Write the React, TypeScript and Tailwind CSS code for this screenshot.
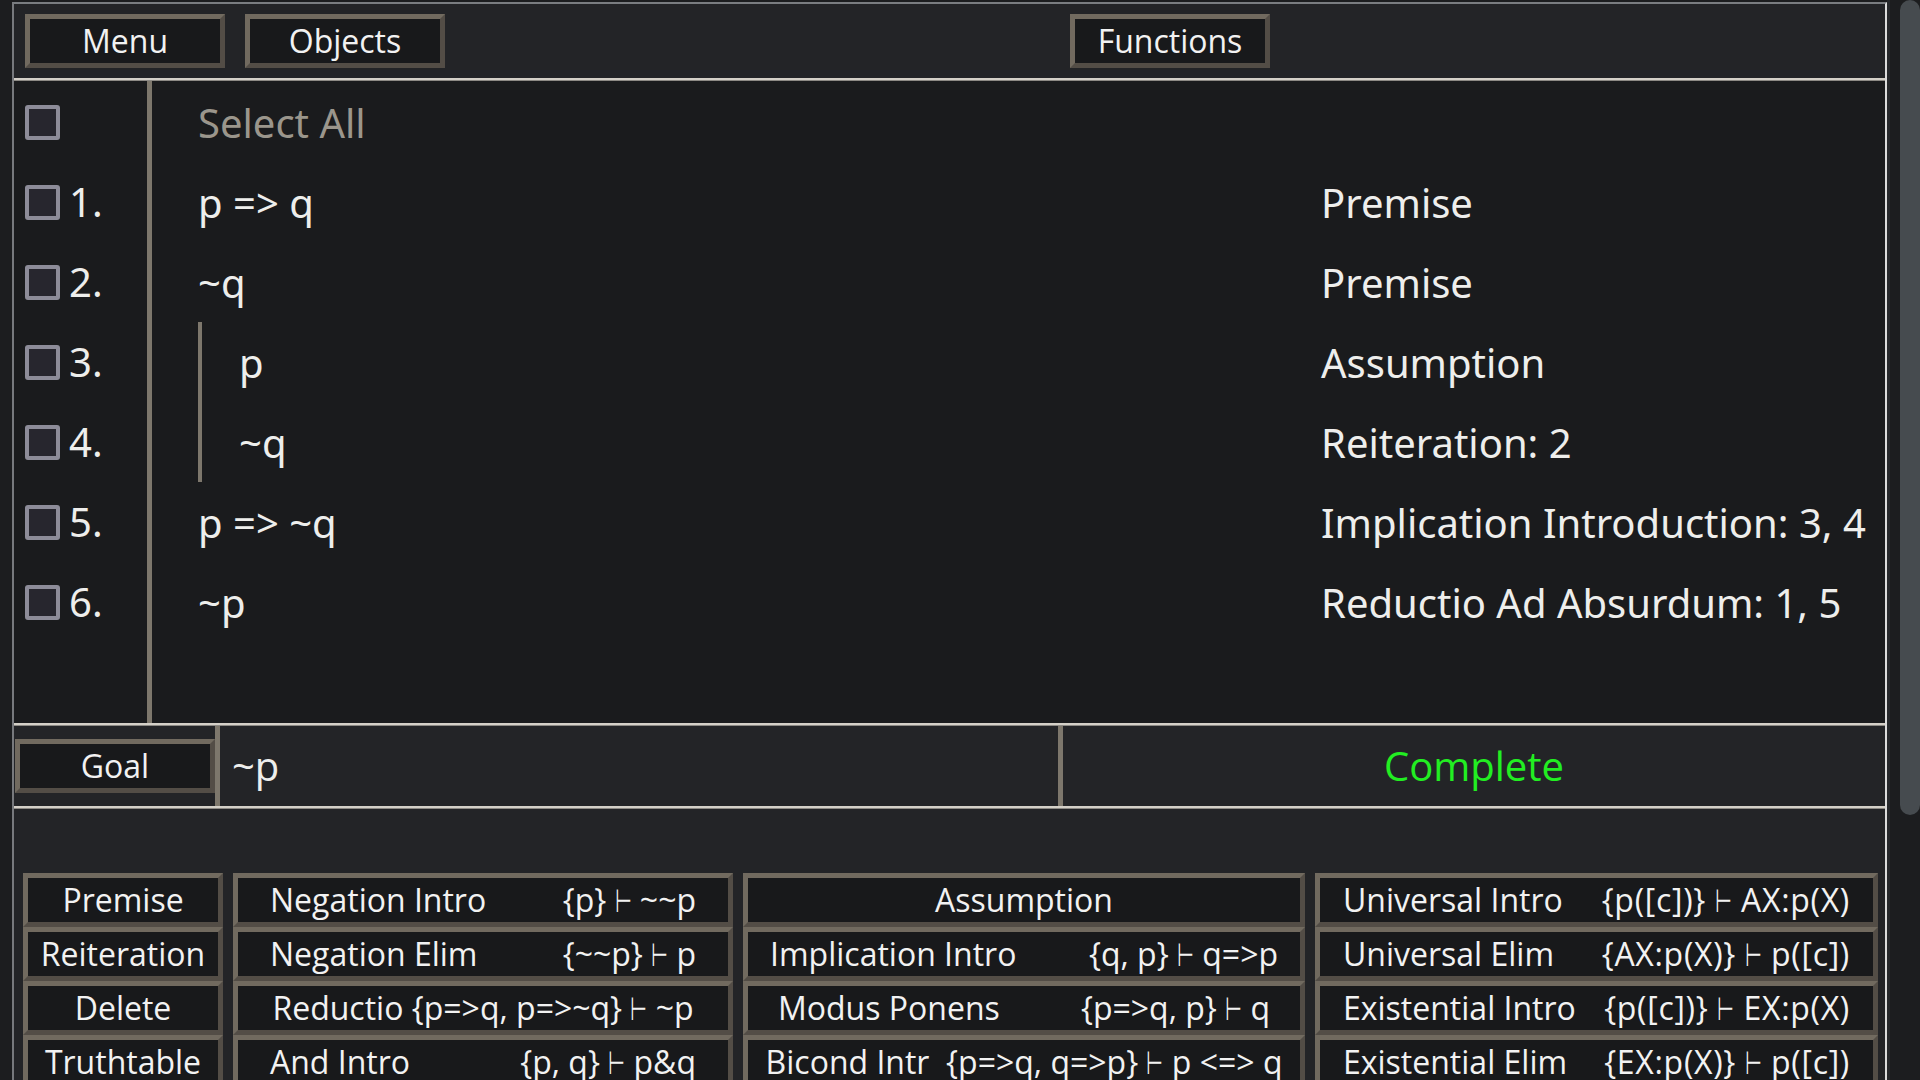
import React from "react";

function Btn({ children, className = "" }: { children: React.ReactNode; className?: string }) {
  return (
    <div
      className={
        "flex items-center justify-center box-border border-[5px] border-t-[#716a5f] border-l-[#716a5f] border-b-[#534d46] border-r-[#534d46] bg-[#18191b] text-[#f2f2f2] text-[32px] whitespace-pre font-['Open_Sans','DejaVu_Sans',sans-serif] " +
        className
      }
    >
      {children}
    </div>
  );
}

function Turn() {
  return (
    <span className="inline-block w-[17px]">
      <span className="inline-block origin-left scale-x-[0.6]">⊢</span>
    </span>
  );
}

function F({ pre, post, wide = false }: { pre: string; post: string; wide?: boolean }) {
  return (
    <span className={wide ? "whitespace-pre tracking-[0.7px]" : "whitespace-pre"}>
      {pre + " "}
      <Turn />
      {" " + post}
    </span>
  );
}

function Split({ w, a, pre, post, wide = false }: { w: string; a: string; pre: string; post: string; wide?: boolean }) {
  return (
    <div className={"flex justify-between " + w}>
      <span>{a}</span>
      <F pre={pre} post={post} wide={wide} />
    </div>
  );
}

function Check() {
  return <div className="w-[35px] h-[35px] shrink-0 box-border border-4 border-[#8d8c99] bg-[#27262e] rounded-[3px]" />;
}

function HLine() {
  return <div className="h-[3px] shrink-0 box-border border-t-2 border-[#d4d0c8] bg-[#8d8a85]" />;
}

const lines = [
  { t: "p => q", j: "Premise" },
  { t: "~q", j: "Premise" },
  { t: "p", j: "Assumption" },
  { t: "~q", j: "Reiteration: 2" },
  { t: "p => ~q", j: "Implication Introduction: 3, 4" },
  { t: "~p", j: "Reductio Ad Absurdum: 1, 5" },
];

export default function App() {
  return (
    <div className="h-screen w-full overflow-hidden bg-[#1c1d1f] flex font-['Noto_Sans',sans-serif]">
      <div className="w-[12px] shrink-0" />
      <div className="w-[1875px] shrink-0 mt-[2px] flex flex-col box-border border-t-2 border-l-2 border-r-2 border-t-[#7a7d81] border-l-[#77797d] border-r-[#dcdcdc]">
        {/* top bar */}
        <div className="h-[74px] shrink-0 bg-[#232427] flex items-start pt-[10px] pl-[11px]">
          <Btn className="w-[200px] h-[54px]">Menu</Btn>
          <Btn className="w-[200px] h-[54px] ml-[20px]">Objects</Btn>
          <Btn className="w-[200px] h-[54px] ml-[625px]">Functions</Btn>
        </div>
        <HLine />
        {/* proof area */}
        <div className="h-[642px] shrink-0 bg-[#1a1b1d] flex text-[40px] text-[#eeeeec]">
          <div className="w-[133px] shrink-0 pl-[11px] pt-[1px] flex flex-col">
            <div className="h-[80px] flex items-center">
              <Check />
            </div>
            {lines.map((_, i) => (
              <div key={i} className="h-[80px] flex items-center">
                <Check />
                <span className="ml-[9px]">{i + 1}.</span>
              </div>
            ))}
          </div>
          <div className="w-[5px] shrink-0 bg-[#7d776c]" />
          <div className="flex-1 pt-[1px] flex flex-col">
            <div className="h-[80px] flex items-center pl-[46px] pt-[2px] text-[#9b968c]">Select All</div>
            {lines.slice(0, 2).map((l, i) => (
              <div key={i} className="h-[80px] flex items-center pt-[2px]">
                <span className="w-[1169px] shrink-0 pl-[46px] whitespace-pre">{l.t}</span>
                <span className="whitespace-pre">{l.j}</span>
              </div>
            ))}
            <div className="ml-[46px] border-l-4 border-[#7d776c]">
              {lines.slice(2, 4).map((l, i) => (
                <div key={i} className="h-[80px] flex items-center pt-[2px]">
                  <span className="w-[1119px] shrink-0 pl-[37px] whitespace-pre">{l.t}</span>
                  <span className="whitespace-pre">{l.j}</span>
                </div>
              ))}
            </div>
            {lines.slice(4).map((l, i) => (
              <div key={i} className="h-[80px] flex items-center pt-[2px]">
                <span className="w-[1169px] shrink-0 pl-[46px] whitespace-pre">{l.t}</span>
                <span className="whitespace-pre">{l.j}</span>
              </div>
            ))}
          </div>
        </div>
        <HLine />
        {/* goal row */}
        <div className="h-[80px] shrink-0 bg-[#232427] flex font-['Open_Sans',sans-serif] text-[40px]">
          <div className="pl-[1px] flex items-center">
            <Btn className="w-[200px] h-[54px]">Goal</Btn>
          </div>
          <div className="w-[5px] shrink-0 bg-[#7d776c]" />
          <div className="w-[838px] shrink-0 flex items-center pl-[12px] text-[#eeeeec]">~p</div>
          <div className="w-[5px] shrink-0 bg-[#7d776c]" />
          <div className="flex-1 flex items-center justify-center text-[#22ee22]">Complete</div>
        </div>
        <HLine />
        {/* bottom panel */}
        <div className="grow shrink-0 bg-[#232427] pt-[64px] pl-[9px]">
          <div className="grid grid-cols-[200px_500px_562px_563px] gap-x-[10px] auto-rows-[54px]">
            <Btn>Premise</Btn>
            <Btn>
              <Split w="w-[426px]" a="Negation Intro" pre="{p}" post="~~p" />
            </Btn>
            <Btn>Assumption</Btn>
            <Btn>
              <Split w="w-[507px]" a="Universal Intro" pre="{p([c])}" post="AX:p(X)" wide />
            </Btn>

            <Btn>Reiteration</Btn>
            <Btn>
              <Split w="w-[426px]" a="Negation Elim" pre="{~~p}" post="p" />
            </Btn>
            <Btn>
              <Split w="w-[508px]" a="Implication Intro" pre="{q, p}" post="q=>p" />
            </Btn>
            <Btn>
              <Split w="w-[507px]" a="Universal Elim" pre="{AX:p(X)}" post="p([c])" wide />
            </Btn>

            <Btn>Delete</Btn>
            <Btn>
              <F pre="Reductio {p=>q, p=>~q}" post="~p" />
            </Btn>
            <Btn>
              <Split w="w-[492px]" a="Modus Ponens" pre="{p=>q, p}" post="q" />
            </Btn>
            <Btn>
              <Split w="w-[507px]" a="Existential Intro" pre="{p([c])}" post="EX:p(X)" wide />
            </Btn>

            <Btn>Truthtable</Btn>
            <Btn>
              <Split w="w-[426px]" a="And Intro" pre="{p, q}" post="p&q" />
            </Btn>
            <Btn>
              <F pre="Bicond Intr  {p=>q, q=>p}" post="p <=> q" />
            </Btn>
            <Btn>
              <Split w="w-[507px]" a="Existential Elim" pre="{EX:p(X)}" post="p([c])" wide />
            </Btn>
          </div>
        </div>
      </div>
      <div className="w-[3px] shrink-0 bg-[#26282b]" />
      <div className="w-[10px] shrink-0" />
      <div className="w-[20px] shrink-0">
        <div className="w-[20px] h-[815px] rounded-[10px] bg-[#464b4f]" />
      </div>
    </div>
  );
}
